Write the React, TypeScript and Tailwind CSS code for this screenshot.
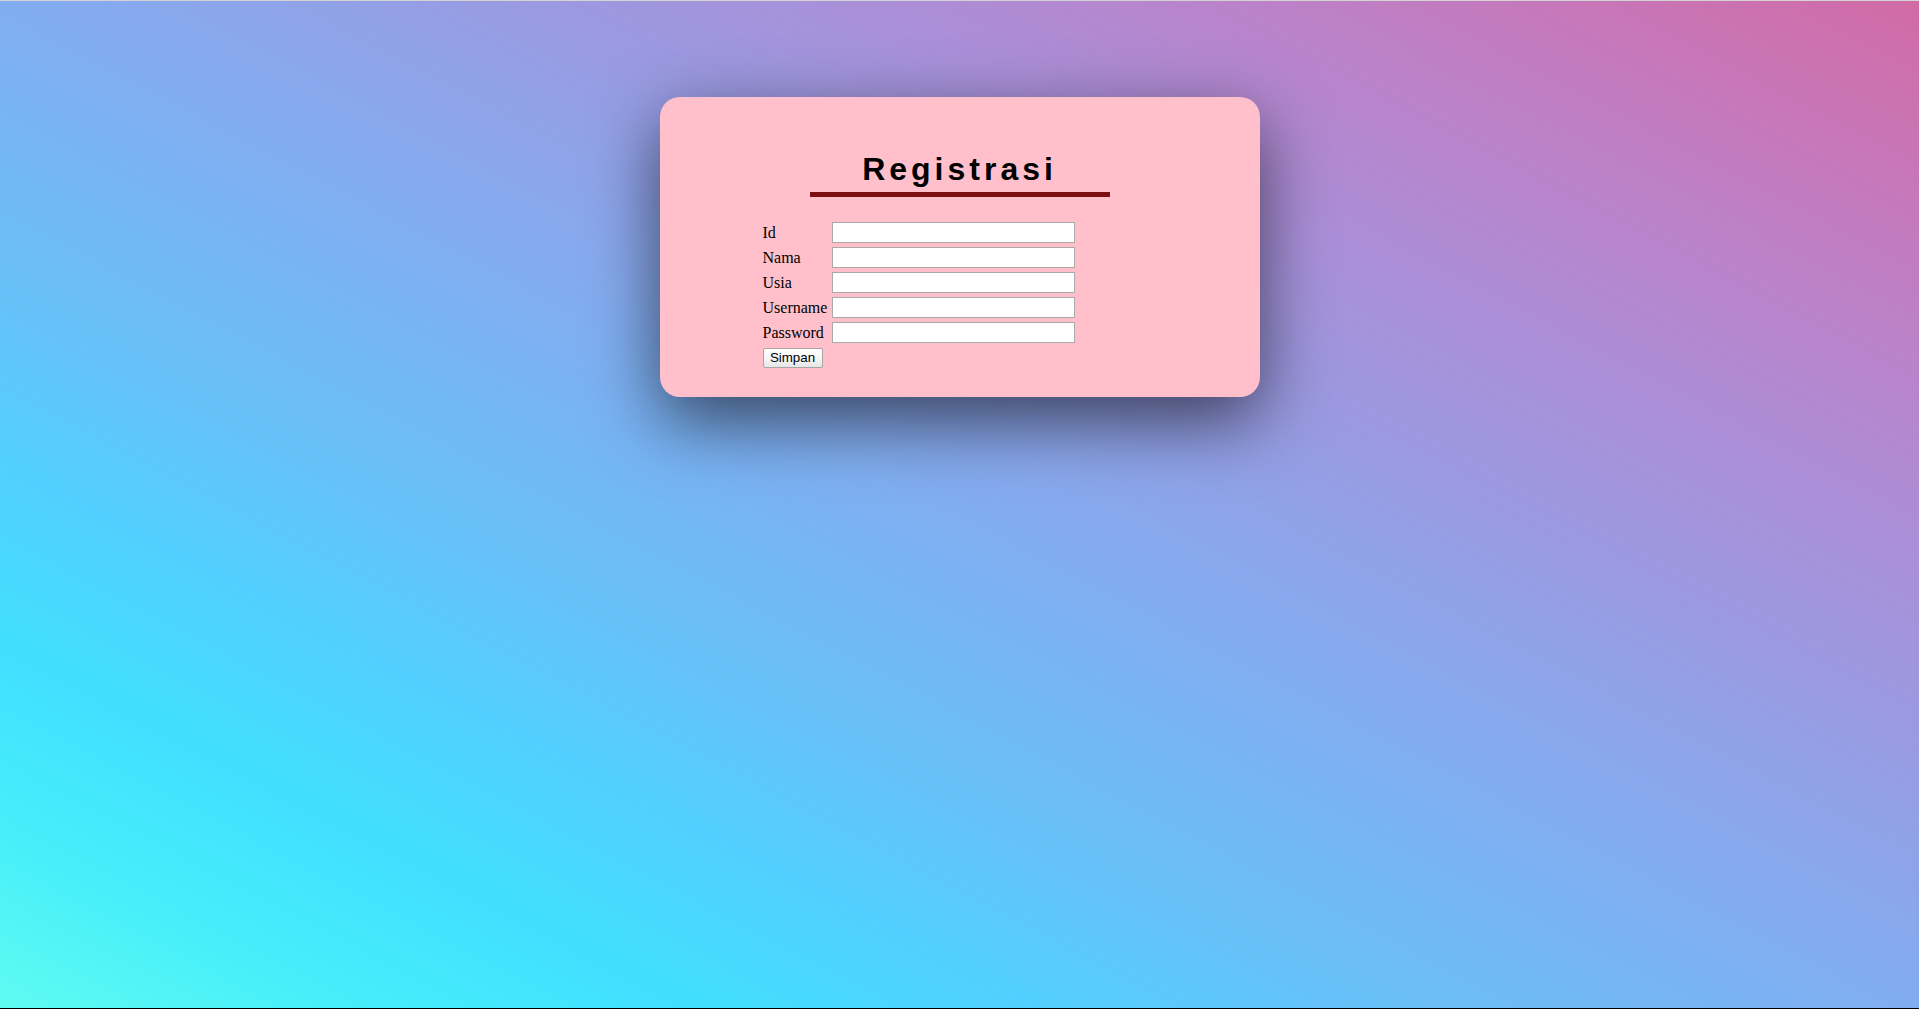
import React from "react";

const fields = ["Id", "Nama", "Usia", "Username", "Password"];

export default function App() {
  return (
    <div className="flex h-screen w-full flex-col overflow-hidden border-t border-b border-t-[#d3d3d3] border-b-black bg-[linear-gradient(to_right_top,#5ffbf1,#46eefa,#41dfff,#52cffe,#69bff8,#79b3f4,#8aa7ec,#9a9ae1,#aa8fd8,#ba83ca,#c777b9,#d16ba5)]">
      <div className="mx-auto mt-[96px] w-[600px] rounded-[20px] bg-[#ffc0cb] pt-[54px] pb-[29px] shadow-[0_24px_70px_rgba(0,0,0,0.6)]">
        <h1 className="text-center font-['Liberation_Sans',Arial,sans-serif] text-[32px] leading-[37px] font-bold tracking-[4px] text-black">
          Registrasi
        </h1>
        <div className="mx-auto mt-[4px] h-[5px] w-[300px] bg-[#7b1010]" />

        <form
          className="mt-[25px] ml-[103px] flex flex-col gap-[4px] font-['Liberation_Serif','Times_New_Roman',serif] text-[16px] text-black"
          onSubmit={(e) => e.preventDefault()}
        >
          {fields.map((label) => (
            <div key={label} className="flex h-[21px] items-center">
              <label className="w-[69px] leading-[21px]">{label}</label>
              <input
                type={label === "Password" ? "password" : "text"}
                className="h-[21px] w-[243px] border border-[#a9a9a9] bg-white px-[2px] text-[13px] outline-none"
              />
            </div>
          ))}
          <div className="mt-[1px] flex h-[20px] items-center">
            <button
              type="submit"
              className="h-[20px] w-[60px] rounded-[2px] border border-[#a6a6a6] bg-[linear-gradient(180deg,#ffffff_0%,#f4f4f4_60%,#e6e6e6_100%)] text-center font-['Liberation_Sans',Arial,sans-serif] text-[13.33px] leading-[16px] text-black"
            >
              Simpan
            </button>
          </div>
        </form>
      </div>
    </div>
  );
}
